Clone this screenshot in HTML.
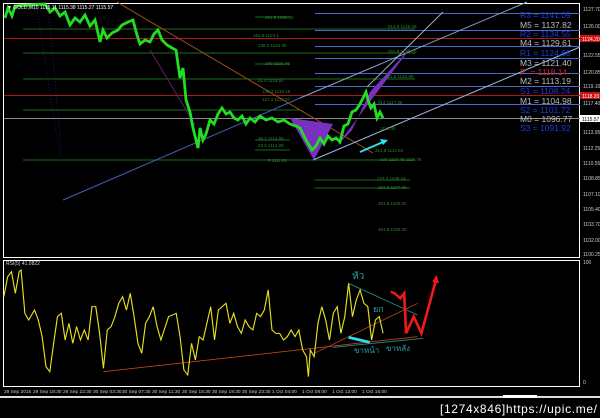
<!DOCTYPE html>
<html><head><meta charset="utf-8"><style>
html,body{margin:0;padding:0;background:#000;width:600px;height:418px;overflow:hidden}
svg{display:block}
text{font-family:"Liberation Sans",sans-serif}
</style></head><body>
<svg width="600" height="418" viewBox="0 0 600 418" xmlns="http://www.w3.org/2000/svg">
<rect width="600" height="418" fill="#000"/>
<rect x="3.5" y="3.5" width="576" height="254" fill="none" stroke="#fff" stroke-width="1"/>
<rect x="3.5" y="260.5" width="576" height="126" fill="none" stroke="#fff" stroke-width="1"/>
<line x1="36" y1="4" x2="60" y2="157" stroke="#1a1a6a" stroke-dasharray="1,2"/>
<line x1="48" y1="4" x2="62" y2="157" stroke="#1a1a6a" stroke-dasharray="1,2"/>
<g stroke="#1d6b1d" stroke-width="1">
<line x1="23" y1="29" x2="415" y2="29"/>
<line x1="23" y1="53" x2="415" y2="53"/>
<line x1="23" y1="79" x2="415" y2="79"/>
<line x1="23" y1="110" x2="300" y2="110"/>
<line x1="23" y1="160" x2="415" y2="160"/>
<line x1="315" y1="180" x2="410" y2="180"/>
<line x1="315" y1="188" x2="410" y2="188"/>
<line x1="255" y1="17" x2="290" y2="17"/>
<line x1="255" y1="64" x2="290" y2="64"/>
<line x1="255" y1="140" x2="290" y2="140"/>
<line x1="255" y1="150" x2="290" y2="150"/>
</g>
<line x1="4" y1="38.5" x2="580" y2="38.5" stroke="#b01818"/>
<line x1="4" y1="95.5" x2="580" y2="95.5" stroke="#b01818"/>
<line x1="4" y1="118.5" x2="580" y2="118.5" stroke="#888"/>
<g stroke="#4a6ad0" stroke-width="1">
<line x1="315" y1="13.5" x2="580" y2="13.5"/>
<line x1="315" y1="30.5" x2="580" y2="30.5"/>
<line x1="315" y1="46.5" x2="580" y2="46.5"/>
<line x1="315" y1="58.5" x2="580" y2="58.5"/>
<line x1="315" y1="73.5" x2="580" y2="73.5"/>
<line x1="315" y1="86.5" x2="580" y2="86.5"/>
<line x1="315" y1="104.5" x2="580" y2="104.5"/>
</g>
<line x1="117" y1="2" x2="373" y2="153" stroke="#a0501a"/>
<line x1="63" y1="200" x2="300" y2="98" stroke="#4a5ab0"/>
<line x1="300" y1="98" x2="527" y2="2" stroke="#8aa0d0"/>
<line x1="313" y1="160" x2="580" y2="47" stroke="#9ab8e0"/>
<line x1="367" y1="87" x2="443" y2="12" stroke="#9ab0c0"/>
<line x1="150" y1="50" x2="195" y2="125" stroke="#6a1a6a"/>
<polygon points="290,118 314,160 333,124" fill="#7a2fc0"/>
<polygon points="335,148 412,46 370,92 352,130" fill="#7a2fc0"/>
<polyline fill="none" stroke="#22dd22" stroke-width="2.8" points="5,18 8,8 12,16 15,6 45,4 50,12 55,8 60,16 65,12 70,25 75,18 80,22 85,15 90,26 95,20 100,42 103,30 107,38 112,33 118,30 122,25 128,22 133,20 137,35 140,44 145,40 150,42 154,34 158,30 162,40 167,45 172,48 176,50 180,78 183,68 186,100 190,112 193,128 196,140 198,148 200,128 203,140 206,134 210,120 214,124 218,114 222,108 226,114 230,112 234,118 238,120 242,116 246,124 250,118 255,122 260,116 266,120 272,118 278,122 284,120 290,124 296,126 300,128 306,140 312,150 316,146 320,138 324,144 328,136 332,140 336,138 340,142 344,126 348,124 352,112 356,110 360,104 363,98 366,92 368,100 371,108 374,104 377,118 380,112 383,118"/>
<line x1="360" y1="152" x2="383" y2="142" stroke="#2de0f0" stroke-width="2"/>
<polygon points="388,140 380,139 383,145" fill="#2de0f0"/>
<g fill="#2a8a2a" font-size="4.5">
<text x="265" y="19">261.8 1130.50</text><text x="253" y="37">161.8 1124.1</text><text x="258" y="47">138.2 1123.38</text>
<text x="265" y="65">100 1121.46</text><text x="258" y="82">61.8 1119.50</text><text x="262" y="93">138.2 1118.19</text>
<text x="262" y="101">127.2 1117.57</text><text x="258" y="140">38.2 1114.88</text><text x="258" y="147">23.6 1114.28</text>
<text x="268" y="162">0 1111.02</text><text x="388" y="28">613.8 1125.08</text><text x="388" y="53">261.8 1123.10</text>
<text x="385" y="78">161.8 1120.69</text><text x="378" y="104">214 1117.35</text><text x="380" y="130">1116.45</text>
<text x="375" y="152">261.8 1112.84</text><text x="380" y="161">100 1110.75 1110.76</text><text x="377" y="180">127.2 1108.24</text><text x="378" y="189">161.8 1107.60</text>
<text x="378" y="205">261.8 1105.02</text><text x="378" y="231">461.8 1100.20</text>
</g>
<g font-size="8.5">
<text x="520" y="18" fill="#1a3ae0">R3 = 1141.09</text>
<text x="520" y="28" fill="#bbb">M5 = 1137.82</text>
<text x="520" y="37" fill="#1a3ae0">R2 = 1134.55</text>
<text x="520" y="46" fill="#bbb">M4 = 1129.61</text>
<text x="520" y="56" fill="#1a3ae0">R1 = 1124.68</text>
<text x="520" y="66" fill="#bbb">M3 = 1121.40</text>
<text x="520" y="75" fill="#e02020">P&#160;&#160;= 1118.14</text>
<text x="520" y="84" fill="#bbb">M2 = 1113.19</text>
<text x="520" y="94" fill="#1a3ae0">S1 = 1108.24</text>
<text x="520" y="104" fill="#bbb">M1 = 1104.98</text>
<text x="520" y="113" fill="#1a3ae0">S2 = 1101.72</text>
<text x="520" y="122" fill="#bbb">M0 = 1096.77</text>
<text x="520" y="131" fill="#1a3ae0">S3 = 1091.92</text>
</g>
<text x="7" y="9" fill="#fff" font-size="5">▼ GOLD,M15 1115.11 1115.38 1115.27 1115.57</text>
<g fill="#ccc" font-size="5">
<text x="583" y="11">1127.70</text><text x="583" y="28">1126.00</text><text x="583" y="57">1122.55</text>
<text x="583" y="74">1120.85</text><text x="583" y="88">1119.10</text><text x="583" y="105">1117.40</text>
<text x="583" y="134">1113.95</text><text x="583" y="150">1112.25</text><text x="583" y="165">1110.55</text>
<text x="583" y="180">1108.85</text><text x="583" y="196">1107.10</text><text x="583" y="211">1105.40</text>
<text x="583" y="226">1103.70</text><text x="583" y="242">1102.00</text><text x="583" y="256">1100.25</text>
</g>
<rect x="580" y="35" width="20" height="7" fill="#d01010"/>
<rect x="580" y="92" width="20" height="7" fill="#d01010"/>
<rect x="580" y="115" width="20" height="7" fill="#fff"/>
<text x="582" y="41" fill="#fff" font-size="5">1124.20</text>
<text x="582" y="98" fill="#fff" font-size="5">1118.20</text>
<text x="582" y="121" fill="#000" font-size="5">1115.57</text>
<text x="6" y="265" fill="#ddd" font-size="5">RSI(5) 41.0822</text>
<text x="583" y="264" fill="#ccc" font-size="5">100</text>
<text x="583" y="384" fill="#ccc" font-size="5">0</text>
<g transform="translate(0,250) scale(0.3831,0.3333)">
<line x1="270" y1="365" x2="1090" y2="260" stroke="#c0401a" stroke-width="2.6"/>
<line x1="820" y1="310" x2="1090" y2="160" stroke="#a0401a" stroke-width="2.6"/>
<line x1="910" y1="100" x2="1090" y2="195" stroke="#2a8a8a" stroke-width="2.6"/>
<line x1="870" y1="292" x2="1105" y2="265" stroke="#2a8a8a" stroke-width="2.6"/>
<polyline fill="none" stroke="#e8e020" stroke-width="3" points="10,140 20,80 30,65 40,130 50,65 55,60 65,190 75,210 90,180 100,210 110,260 120,350 130,365 140,280 150,200 160,190 170,270 180,220 190,280 200,230 210,270 220,240 230,270 240,170 250,170 260,250 270,355 280,240 290,230 300,200 310,160 320,140 330,180 340,130 350,200 360,280 370,310 380,220 390,200 400,170 410,230 420,270 440,200 460,190 470,260 480,360 490,375 500,280 510,330 520,260 530,270 540,220 550,170 560,270 570,180 580,170 590,160 600,220 610,190 620,230 630,250 640,210 650,230 660,240 670,190 680,200 690,180 700,120 710,240 720,250 730,250 740,270 750,260 760,240 770,260 780,240 790,300 800,320 805,380 810,300 820,320 830,220 840,170 850,210 860,270 870,190 880,170 890,250 900,200 910,100 920,200 930,150 940,120 950,160 960,170 970,270 980,210 990,200 1000,250"/>
<line x1="910" y1="262" x2="965" y2="277" stroke="#2de0f0" stroke-width="8"/>
<polyline fill="none" stroke="#ee1a1a" stroke-width="7" points="1020,125 1030,130 1045,145 1055,130 1060,250 1080,200 1100,250 1138,90"/>
<polygon points="1128,95 1140,75 1146,100" fill="#ee1a1a"/>
</g>
<text x="352" y="279" fill="#2aa0a0" font-size="10" font-family="'Liberation Sans','Noto Sans CJK SC',sans-serif">หัว</text>
<text x="373" y="312" fill="#2aa0a0" font-size="9" font-family="'Liberation Sans','Noto Sans CJK SC',sans-serif">ยก</text>
<text x="354" y="353" fill="#2aa0a0" font-size="8" font-family="'Liberation Sans','Noto Sans CJK SC',sans-serif">ขาหน้า</text>
<text x="386" y="351" fill="#2aa0a0" font-size="8" font-family="'Liberation Sans','Noto Sans CJK SC',sans-serif">ขาหลัง</text>
<g fill="#ccc" font-size="4.8">
<text x="4" y="393">29 Sep 2015</text><text x="33" y="393">29 Sep 18:30</text><text x="63" y="393">29 Sep 22:30</text>
<text x="93" y="393">30 Sep 03:30</text><text x="122" y="393">30 Sep 07:30</text><text x="152" y="393">30 Sep 11:30</text>
<text x="182" y="393">30 Sep 15:30</text><text x="212" y="393">30 Sep 19:30</text><text x="242" y="393">30 Sep 23:30</text>
<text x="272" y="393">1 Oct 04:00</text><text x="302" y="393">1 Oct 08:00</text><text x="332" y="393">1 Oct 12:00</text>
<text x="362" y="393">1 Oct 16:00</text>
</g>
<rect x="0" y="396" width="600" height="2" fill="#ddd"/>
<rect x="503" y="395" width="34" height="3" fill="#fff"/>
<text x="440" y="413" fill="#fff" font-size="12" font-family="'Liberation Mono',monospace" textLength="157">[1274x846]https://upic.me/</text>
</svg>
</body></html>
